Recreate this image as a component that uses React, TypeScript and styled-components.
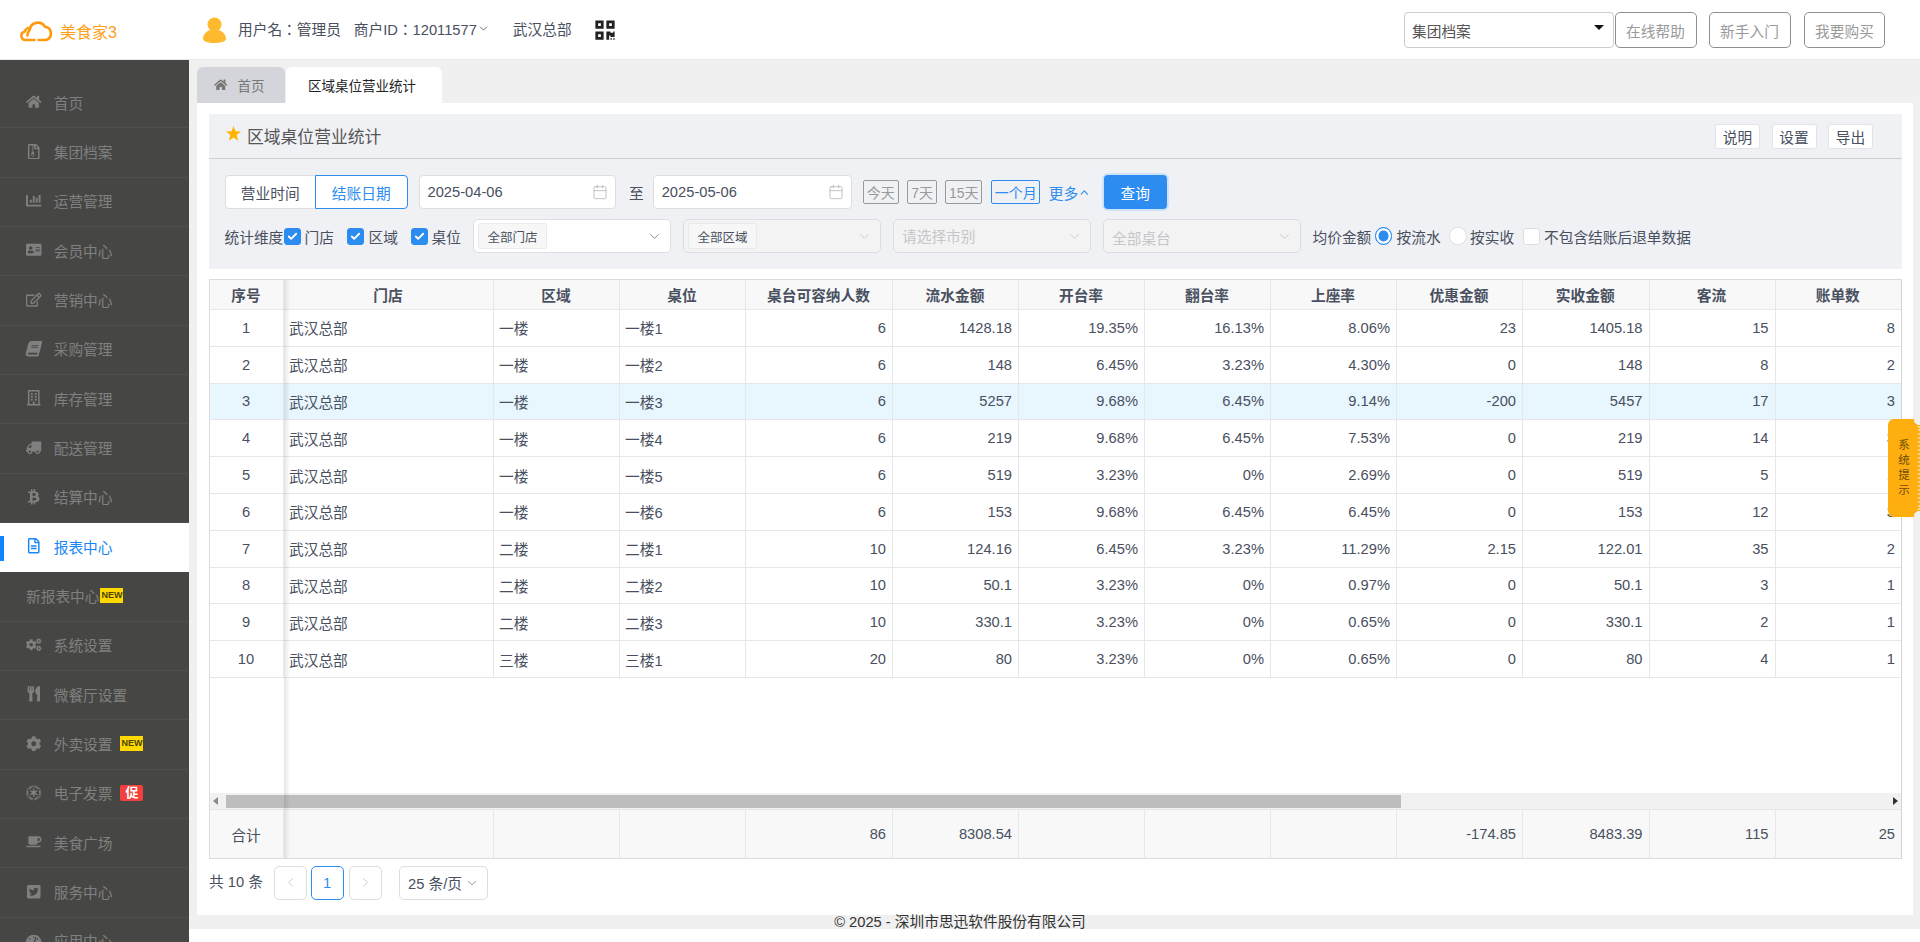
import React from 'react';
import styled, {createGlobalStyle} from 'styled-components';
import {Calendar, Check, ChevronDown, ChevronLeft, ChevronRight, ChevronUp} from 'lucide-react';
import {
  FaAddressCard, FaBook, FaBtc, FaChartBar, FaCoffee, FaCog, FaCogs, FaEmpire, FaHome,
  FaQrcode, FaRegBuilding, FaRegEdit, FaRegFileAlt, FaRegFileArchive,
  FaTachometerAlt, FaTruck, FaTwitterSquare, FaUtensils
} from 'react-icons/fa';

const GlobalStyle = createGlobalStyle`
  html, body {
    margin: 0;
    height: 100%;
    overflow: hidden;
  }
  body {
    font-family: "Liberation Sans", "Noto Sans CJK SC", sans-serif;
    font-size: 14.7px;
    color: #495060;
    background: #fff;
  }
  * {
    box-sizing: border-box;
  }
`;

const Page = styled.div`
  position: relative;
  height: 942px;
  display: flex;
  flex-direction: column;
  overflow: hidden;
`;

/* header */
const Header = styled.header`
  height: 60px;
  flex: none;
  display: flex;
  align-items: center;
  background: #fff;
  border-bottom: 1px solid #eaeaea;
  padding-right: 35px;
`;
const LogoBox = styled.div`
  width: 189px;
  padding-left: 20px;
  display: flex;
  align-items: center;
  gap: 6px;
  color: #ff9f1c;
  font-size: 16px;
  margin-top: 2px;
`;
const UserBox = styled.div`
  display: flex;
  align-items: center;
  margin-left: 14px;
  flex: 1;
`;
const UserText = styled.span<{$ml: number}>`
  margin-left: ${p => p.$ml}px;
  display: inline-flex;
  align-items: center;
  margin-top: -2px;
  font-family: "Liberation Sans", "Noto Sans CJK TC", sans-serif;
`;
const QrIcon = styled(FaQrcode)`
  margin-left: 22px;
  width: 22px;
  height: 22px;
  color: #222;
`;
const TopSelect = styled.div`
  position: relative;
  width: 209.5px;
  height: 36px;
  border: 1px solid #ccc;
  border-radius: 4px;
  display: flex;
  align-items: center;
  padding-left: 7px;
  color: #555;
  margin-right: 1px;
  margin-top: 1px;
  &::after {
    content: '';
    position: absolute;
    right: 9px;
    top: 12px;
    border: 5px solid transparent;
    border-top: 5px solid #111;
  }
`;
const TopButton = styled.button<{$ml: number; $w: number}>`
  width: ${p => p.$w}px;
  height: 36px;
  margin-left: ${p => p.$ml}px;
  margin-top: 1px;
  padding: 0;
  background: #fff;
  border: 1px solid #8f8f8f;
  border-radius: 5px;
  color: #9a9a9a;
  font: inherit;
`;

/* sidebar */
const Body = styled.div`
  flex: 1;
  display: flex;
  min-height: 0;
`;
const Sidebar = styled.nav`
  width: 189px;
  flex: none;
  background: #464744;
  padding-top: 19px;
  overflow: hidden;
`;
const MenuItem = styled.div<{$active?: boolean}>`
  position: relative;
  height: 49.33px;
  flex: none;
  display: flex;
  align-items: center;
  padding: 0 0 2px 26px;
  color: ${p => p.$active ? '#1a86f5' : '#808080'};
  background: ${p => p.$active ? '#fff' : 'transparent'};
  border-bottom: 1px solid ${p => p.$active ? '#fff' : '#504f4d'};
  ${p => p.$active && `
    &::before {
      content: '';
      position: absolute;
      left: 0;
      top: 13px;
      width: 4px;
      height: 25px;
      background: #1284ff;
    }
  `}
`;
const MenuIcon = styled.span<{$shape?: string}>`
  width: 27.7px;
  display: flex;
  align-items: center;
  font-size: 15.5px;
  svg {
    transform: ${p => p.$shape || 'none'};
  }
`;
const NewBadge = styled.span<{$ml: number}>`
  width: 23px;
  height: 15.5px;
  margin-left: ${p => p.$ml}px;
  background: #ffd800;
  color: #4a4300;
  font-size: 9px;
  font-weight: 700;
  line-height: 15.5px;
  text-align: center;
`;
const PromoBadge = styled(NewBadge)`
  background: #f2403c;
  color: #fff;
  font-size: 13px;
  font-weight: 700;
  border-radius: 2px;
`;

/* content */
const Main = styled.main`
  flex: 1;
  min-width: 0;
  display: flex;
  flex-direction: column;
  background: #fff;
`;
const Workspace = styled.div`
  flex: 1;
  min-height: 0;
  display: flex;
  flex-direction: column;
  background: #f0f0f0;
  padding: 7px 7px 0 8px;
`;
const Tabs = styled.div`
  height: 36px;
  flex: none;
  display: flex;
  gap: 1px;
  font-size: 13.5px;
`;
const Tab = styled.div<{$active?: boolean}>`
  width: ${p => p.$active ? 156 : 88}px;
  display: flex;
  align-items: center;
  gap: 10px;
  padding-left: ${p => p.$active ? 22 : 17}px;
  border-radius: 6px 6px 0 0;
  background: ${p => p.$active ? '#fff' : '#d4d5da'};
  color: ${p => p.$active ? '#222' : '#777'};
`;
const Panel = styled.section`
  flex: 1;
  min-height: 0;
  display: flex;
  flex-direction: column;
  background: #fff;
  padding: 11px 11px 0 12px;
`;
const ToolCard = styled.div`
  height: 155px;
  flex: none;
  background: #f0f1f5;
`;
const TitleBar = styled.div`
  height: 45px;
  display: flex;
  align-items: center;
  padding: 0 29px 0 17px;
  border-bottom: 1px solid #cfcfcf;
`;
const StarIcon = styled.svg`
  width: 15px;
  height: 15px;
  fill: #ffb400;
  margin-top: -6px;
`;
const Title = styled.h1`
  flex: 1;
  margin: 0 0 0 6px;
  font-size: 16.8px;
  font-weight: 400;
  color: #555;
`;
const SmallButton = styled.button`
  width: 45px;
  height: 25px;
  margin-left: 11.5px;
  padding: 0;
  background: #fff;
  border: 1px solid #e2e3e6;
  border-radius: 3px;
  color: #495060;
  font: inherit;
`;
const FilterRow = styled.div<{$mt: number}>`
  display: flex;
  align-items: center;
  height: 34px;
  margin-top: ${p => p.$mt}px;
  padding-left: 15.5px;
`;
const Segment = styled.div<{$active?: boolean; $w: number}>`
  width: ${p => p.$w}px;
  height: 34px;
  display: flex;
  align-items: center;
  justify-content: center;
  background: #fff;
  color: ${p => p.$active ? '#2d8cf0' : '#495060'};
  border: 1px solid ${p => p.$active ? '#2d8cf0' : '#dddee1'};
  border-radius: ${p => p.$active ? '0 4px 4px 0' : '4px 0 0 4px'};
  ${p => !p.$active && 'border-right: none;'}
`;
const DateInput = styled.div<{$w: number; $ml: number}>`
  width: ${p => p.$w}px;
  height: 34px;
  margin-left: ${p => p.$ml}px;
  display: flex;
  align-items: center;
  justify-content: space-between;
  padding: 0 7px 0 8px;
  background: #fff;
  border: 1px solid #dddee1;
  border-radius: 4px;
  svg {
    color: #b3b5ba;
  }
`;
const ToLabel = styled.span`
  margin-left: 13px;
  margin-right: -3px;
`;
const QuickButton = styled.span<{$active?: boolean; $w: number; $ml: number}>`
  width: ${p => p.$w}px;
  height: 24px;
  margin-left: ${p => p.$ml}px;
  display: flex;
  align-items: center;
  justify-content: center;
  font-size: 14px;
  white-space: nowrap;
  color: ${p => p.$active ? '#2d8cf0' : '#999'};
  border: 1px solid ${p => p.$active ? '#2d8cf0' : '#999'};
  border-radius: 2px;
`;
const MoreLink = styled.span`
  width: 42px;
  margin-left: 8.5px;
  display: flex;
  align-items: center;
  color: #2d8cf0;
  white-space: nowrap;
`;
const QueryButton = styled.button`
  width: 63px;
  height: 34px;
  margin-left: 13px;
  padding: 0;
  background: #2d8cf0;
  border: none;
  border-radius: 4px;
  box-shadow: 0 0 0 2px #cfe2f9;
  color: #fff;
  font: inherit;
`;
const DimLabel = styled.span<{$w: number; $ml?: number}>`
  width: ${p => p.$w}px;
  margin-left: ${p => p.$ml || 0}px;
  white-space: nowrap;
`;
const CheckBox = styled.span<{$on?: boolean; $ml: number}>`
  width: 17px;
  height: 17px;
  flex: none;
  margin-left: ${p => p.$ml}px;
  display: flex;
  align-items: center;
  justify-content: center;
  background: ${p => p.$on ? '#2d8cf0' : '#fff'};
  border: 1px solid ${p => p.$on ? '#2d8cf0' : '#dddee1'};
  border-radius: 3px;
  color: #fff;
`;
const Select = styled.div<{$disabled?: boolean; $ml: number}>`
  width: 198px;
  height: 34px;
  margin-left: ${p => p.$ml}px;
  display: flex;
  align-items: center;
  justify-content: space-between;
  padding: 0 8px 0 4px;
  background: ${p => p.$disabled ? '#f3f3f3' : '#fff'};
  border: 1px solid #dddee1;
  border-radius: 5px;
  svg {
    color: ${p => p.$disabled ? '#c5c8ce' : '#80848f'};
  }
`;
const SelectTag = styled.span`
  width: 69px;
  height: 26px;
  display: flex;
  align-items: center;
  justify-content: center;
  font-size: 12.5px;
  background: #f7f7f7;
  border: 1px solid #e9eaec;
  border-radius: 3px;
`;
const Placeholder = styled.span<{$low?: boolean}>`
  padding-left: 4px;
  color: #c4c6c9;
  margin-top: ${p => p.$low ? 3 : -1}px;
`;
const Radio = styled.span<{$on?: boolean; $ml: number}>`
  width: 17.5px;
  height: 17.5px;
  flex: none;
  margin-left: ${p => p.$ml}px;
  border-radius: 50%;
  background: #fff;
  border: 1px solid ${p => p.$on ? '#2d8cf0' : '#dddee1'};
  ${p => p.$on && 'box-shadow: inset 0 0 0 2.5px #fff; background: #2d8cf0;'}
`;

/* table */
const columns = '74px 210px 126px 126px 147px 126px 126px 126px 126px 126px 126.5px 126px 125.5px';

const TableBox = styled.div`
  position: relative;
  flex: 1;
  min-height: 0;
  margin-top: 10px;
  display: flex;
  flex-direction: column;
  border: 1px solid #dcdcdc;
  border-right-color: #d4d4d4;
  overflow: hidden;
`;
const Row = styled.div<{$hl?: boolean}>`
  display: grid;
  grid-template-columns: ${columns};
  height: 36.8px;
  flex: none;
  border-bottom: 1px solid #e6e7ea;
  background: ${p => p.$hl ? '#e8f6fe' : '#fff'};
`;
const HeadRow = styled(Row)`
  height: 30px;
  background: #f8f8f9;
  font-weight: 700;
`;
const TotalRow = styled(Row)`
  height: 48px;
  background: #f8f8f8;
  border-bottom: none;
`;
const Cell = styled.div<{$align: string}>`
  display: flex;
  align-items: center;
  justify-content: ${p => p.$align};
  padding: 0 6px 0 5px;
  border-right: 1px solid #e6e7ea;
  white-space: nowrap;
  &:last-child {
    border-right: none;
  }
`;
const Filler = styled.div`
  flex: 1;
`;
const FrozenShade = styled.div`
  position: absolute;
  left: 74px;
  top: 0;
  bottom: 0;
  width: 6px;
  background: linear-gradient(to right, rgba(0, 0, 0, .1), rgba(0, 0, 0, 0));
`;
const ScrollBar = styled.div`
  height: 17px;
  flex: none;
  display: flex;
  align-items: center;
  justify-content: space-between;
  padding: 0 3px;
  background: #f1f1f1;
  border-bottom: 1px solid #e6e7ea;
`;
const ArrowLeft = styled.span`
  border: 4px solid transparent;
  border-right: 5px solid #8a8a8a;
  border-left: none;
`;
const ArrowRight = styled.span`
  border: 4px solid transparent;
  border-left: 5px solid #333;
  border-right: none;
`;
const ScrollThumb = styled.div`
  width: 1175px;
  height: 13px;
  margin-left: 8px;
  margin-right: auto;
  background: #bdbdbd;
`;

/* pagination */
const Pager = styled.div`
  height: 56px;
  flex: none;
  display: flex;
  align-items: flex-start;
  padding-top: 7px;
`;
const PagerCount = styled.span`
  width: 65px;
  line-height: 33px;
`;
const PageButton = styled.span<{$active?: boolean; $ml?: number}>`
  width: 33px;
  height: 33.5px;
  margin-left: ${p => p.$ml || 0}px;
  display: flex;
  align-items: center;
  justify-content: center;
  border: 1px solid ${p => p.$active ? '#2d8cf0' : '#dddee1'};
  border-radius: 5px;
  color: ${p => p.$active ? '#2d8cf0' : '#c5c8ce'};
`;
const PageSize = styled.span`
  width: 89px;
  height: 33.5px;
  margin-left: 17px;
  display: flex;
  align-items: center;
  justify-content: center;
  gap: 3px;
  border: 1px solid #dddee1;
  border-radius: 5px;
  svg {
    color: #80848f;
  }
`;

/* footer and side tab */
const FooterBand = styled.footer`
  height: 14px;
  flex: none;
  margin-bottom: 13px;
  padding-right: 189px;
  background: #f0f0f0;
  line-height: 14px;
  text-align: center;
  color: #333;
  white-space: nowrap;
`;
const NoticeTab = styled.div`
  position: absolute;
  right: 0;
  top: 419px;
  width: 32px;
  height: 98px;
  display: flex;
  align-items: center;
  justify-content: center;
  border-radius: 6px 0 0 6px;
  background:
    radial-gradient(circle 6px at 100% 0, transparent 6px, #ffae0f 6.5px) top / 100% 50% no-repeat,
    radial-gradient(circle 6px at 100% 100%, transparent 6px, #ffae0f 6.5px) bottom / 100% 50% no-repeat;
  &::after {
    content: '';
    position: absolute;
    right: 0;
    top: 7px;
    bottom: 7px;
    border-right: 2px dotted #fbd483;
  }
`;
const NoticeText = styled.span`
  width: 12px;
  font-size: 11.5px;
  line-height: 15px;
  text-align: center;
  color: #6f4c05;
`;

type Menu = {
  label: string;
  icon?: React.ReactNode;
  shape?: string;
  active?: boolean;
  badge?: 'new' | 'newTight' | 'promo';
};

const menus: Menu[] = [
  {label: '首页', icon: <FaHome/>},
  {label: '集团档案', icon: <FaRegFileArchive/>},
  {label: '运营管理', icon: <FaChartBar/>},
  {label: '会员中心', icon: <FaAddressCard/>},
  {label: '营销中心', icon: <FaRegEdit/>},
  {label: '采购管理', icon: <FaBook/>, shape: 'skewX(-14deg)'},
  {label: '库存管理', icon: <FaRegBuilding/>},
  {label: '配送管理', icon: <FaTruck/>, shape: 'scaleX(-1)'},
  {label: '结算中心', icon: <FaBtc/>},
  {label: '报表中心', icon: <FaRegFileAlt/>, active: true},
  {label: '新报表中心', badge: 'newTight'},
  {label: '系统设置', icon: <FaCogs/>},
  {label: '微餐厅设置', icon: <FaUtensils/>},
  {label: '外卖设置', icon: <FaCog/>, badge: 'new'},
  {label: '电子发票', icon: <FaEmpire/>, badge: 'promo'},
  {label: '美食广场', icon: <FaCoffee/>},
  {label: '服务中心', icon: <FaTwitterSquare/>},
  {label: '应用中心', icon: <FaTachometerAlt/>}
];

const headers = ['序号', '门店', '区域', '桌位', '桌台可容纳人数', '流水金额', '开台率', '翻台率', '上座率', '优惠金额', '实收金额', '客流', '账单数'];

const rows = [
  ['1', '武汉总部', '一楼', '一楼1', '6', '1428.18', '19.35%', '16.13%', '8.06%', '23', '1405.18', '15', '8'],
  ['2', '武汉总部', '一楼', '一楼2', '6', '148', '6.45%', '3.23%', '4.30%', '0', '148', '8', '2'],
  ['3', '武汉总部', '一楼', '一楼3', '6', '5257', '9.68%', '6.45%', '9.14%', '-200', '5457', '17', '3'],
  ['4', '武汉总部', '一楼', '一楼4', '6', '219', '9.68%', '6.45%', '7.53%', '0', '219', '14', '3'],
  ['5', '武汉总部', '一楼', '一楼5', '6', '519', '3.23%', '0%', '2.69%', '0', '519', '5', '1'],
  ['6', '武汉总部', '一楼', '一楼6', '6', '153', '9.68%', '6.45%', '6.45%', '0', '153', '12', '3'],
  ['7', '武汉总部', '二楼', '二楼1', '10', '124.16', '6.45%', '3.23%', '11.29%', '2.15', '122.01', '35', '2'],
  ['8', '武汉总部', '二楼', '二楼2', '10', '50.1', '3.23%', '0%', '0.97%', '0', '50.1', '3', '1'],
  ['9', '武汉总部', '二楼', '二楼3', '10', '330.1', '3.23%', '0%', '0.65%', '0', '330.1', '2', '1'],
  ['10', '武汉总部', '三楼', '三楼1', '20', '80', '3.23%', '0%', '0.65%', '0', '80', '4', '1']
];

const totals = ['合计', '', '', '', '86', '8308.54', '', '', '', '-174.85', '8483.39', '115', '25'];

const alignOf = (i: number) => {
  if (i === 0) return 'center';
  return i < 4 ? 'flex-start' : 'flex-end';
};

function Logo() {
  return (
    <svg width="34" height="22" viewBox="0 0 34 22" fill="none" stroke="#ff9a0e" strokeWidth="2.6" strokeLinecap="round" strokeLinejoin="round">
      <path d="M14.5 20H5.6a4.3 4.3 0 0 1-.8-8.5 4.4 4.4 0 0 1 5.2-3.3"/>
      <path d="M7.4 15.5a8 8 0 0 1 2.2-5.5 8.3 8.3 0 0 1 15.4-3.2 6.8 6.8 0 0 1 1.2 13.2H18.6"/>
    </svg>
  );
}

function Avatar() {
  return (
    <svg width="23" height="26" viewBox="0 0 23 26" fill="#ffb92e">
      <circle cx="11.5" cy="7.5" r="7"/>
      <path d="M7 13c-4 1.5-7 5-7 8.5 0 3 5 4.500 11.5 4.500S23 24.500 23 21.500C23 18 20 14.500 16 13c-2.700 1.500-6.300 1.500-9 0z"/>
    </svg>
  );
}

function App() {
  return (
    <Page>
      <GlobalStyle/>
      <Header>
        <LogoBox><Logo/>美食家3</LogoBox>
        <UserBox>
          <Avatar/>
          <UserText $ml={12}>用户名：管理员</UserText>
          <UserText $ml={13}>商户ID：12011577<ChevronDown size={13} strokeWidth={1.5}/></UserText>
          <UserText $ml={23}>武汉总部</UserText>
          <QrIcon/>
        </UserBox>
        <TopSelect>集团档案</TopSelect>
        <TopButton $ml={0} $w={82}>在线帮助</TopButton>
        <TopButton $ml={12} $w={82}>新手入门</TopButton>
        <TopButton $ml={13.5} $w={81}>我要购买</TopButton>
      </Header>
      <Body>
        <Sidebar>
          {menus.map(menu =>
            <MenuItem key={menu.label} $active={menu.active}>
              {menu.icon && <MenuIcon $shape={menu.shape}>{menu.icon}</MenuIcon>}
              {menu.label}
              {menu.badge === 'new' && <NewBadge $ml={8}>NEW</NewBadge>}
              {menu.badge === 'newTight' && <NewBadge $ml={1}>NEW</NewBadge>}
              {menu.badge === 'promo' && <PromoBadge $ml={8}>促</PromoBadge>}
            </MenuItem>
          )}
        </Sidebar>
        <Main>
          <Workspace>
            <Tabs>
              <Tab><FaHome/>首页</Tab>
              <Tab $active>区域桌位营业统计</Tab>
            </Tabs>
            <Panel>
              <ToolCard>
                <TitleBar>
                  <StarIcon viewBox="0 0 20 20"><polygon points="10,0 12.6,7 20,7.400 14.200,12 16.200,19.500 10,15.300 3.800,19.500 5.800,12 0,7.400 7.400,7"/></StarIcon>
                  <Title>区域桌位营业统计</Title>
                  <SmallButton>说明</SmallButton>
                  <SmallButton>设置</SmallButton>
                  <SmallButton>导出</SmallButton>
                </TitleBar>
                <FilterRow $mt={16}>
                  <Segment $w={90.5}>营业时间</Segment>
                  <Segment $w={92.5} $active>结账日期</Segment>
                  <DateInput $w={197.5} $ml={11}>2025-04-06<Calendar size={16} strokeWidth={1.2}/></DateInput>
                  <ToLabel>至</ToLabel>
                  <DateInput $w={199} $ml={12}>2025-05-06<Calendar size={16} strokeWidth={1.2}/></DateInput>
                  <QuickButton $w={36} $ml={11}>今天</QuickButton>
                  <QuickButton $w={30} $ml={8.5}>7天</QuickButton>
                  <QuickButton $w={37} $ml={8}>15天</QuickButton>
                  <QuickButton $w={49} $ml={9} $active>一个月</QuickButton>
                  <MoreLink>更多<ChevronUp size={13} strokeWidth={2}/></MoreLink>
                  <QueryButton>查询</QueryButton>
                </FilterRow>
                <FilterRow $mt={10}>
                  <DimLabel $w={59}>统计维度</DimLabel>
                  <CheckBox $on $ml={0}><Check size={11} strokeWidth={4}/></CheckBox>
                  <DimLabel $w={30} $ml={4}>门店</DimLabel>
                  <CheckBox $on $ml={12.5}><Check size={11} strokeWidth={4}/></CheckBox>
                  <DimLabel $w={30} $ml={4.5}>区域</DimLabel>
                  <CheckBox $on $ml={12}><Check size={11} strokeWidth={4}/></CheckBox>
                  <DimLabel $w={30} $ml={4}>桌位</DimLabel>
                  <Select $ml={11.5}>
                    <SelectTag>全部门店</SelectTag>
                    <ChevronDown size={15} strokeWidth={1.5}/>
                  </Select>
                  <Select $disabled $ml={12}>
                    <SelectTag>全部区域</SelectTag>
                    <ChevronDown size={15} strokeWidth={1.5}/>
                  </Select>
                  <Select $disabled $ml={12}>
                    <Placeholder>请选择市别</Placeholder>
                    <ChevronDown size={15} strokeWidth={1.5}/>
                  </Select>
                  <Select $disabled $ml={12}>
                    <Placeholder $low>全部桌台</Placeholder>
                    <ChevronDown size={15} strokeWidth={1.5}/>
                  </Select>
                  <DimLabel $w={59.5} $ml={11.5}>均价金额</DimLabel>
                  <Radio $on $ml={2.5}/>
                  <DimLabel $w={44.5} $ml={4.5}>按流水</DimLabel>
                  <Radio $ml={8}/>
                  <DimLabel $w={44.5} $ml={3.5}>按实收</DimLabel>
                  <CheckBox $ml={8.5}/>
                  <DimLabel $w={147} $ml={4}>不包含结账后退单数据</DimLabel>
                </FilterRow>
              </ToolCard>
              <TableBox>
                <HeadRow>
                  {headers.map(h => <Cell key={h} $align="center">{h}</Cell>)}
                </HeadRow>
                {rows.map(row =>
                  <Row key={row[0]} $hl={row[0] === '3'}>
                    {row.map((text, i) => <Cell key={i} $align={alignOf(i)}>{text}</Cell>)}
                  </Row>
                )}
                <Filler/>
                <ScrollBar>
                  <ArrowLeft/>
                  <ScrollThumb/>
                  <ArrowRight/>
                </ScrollBar>
                <TotalRow>
                  {totals.map((text, i) => <Cell key={i} $align={alignOf(i)}>{text}</Cell>)}
                </TotalRow>
                <FrozenShade/>
              </TableBox>
              <Pager>
                <PagerCount>共 10 条</PagerCount>
                <PageButton><ChevronLeft size={15} strokeWidth={1.5}/></PageButton>
                <PageButton $active $ml={3.5}>1</PageButton>
                <PageButton $ml={5.5}><ChevronRight size={15} strokeWidth={1.5}/></PageButton>
                <PageSize>25 条/页<ChevronDown size={14} strokeWidth={1.5}/></PageSize>
              </Pager>
            </Panel>
          </Workspace>
          <FooterBand>© 2025 - 深圳市思迅软件股份有限公司</FooterBand>
        </Main>
      </Body>
      <NoticeTab><NoticeText>系统提示</NoticeText></NoticeTab>
    </Page>
  );
}

export default App;
